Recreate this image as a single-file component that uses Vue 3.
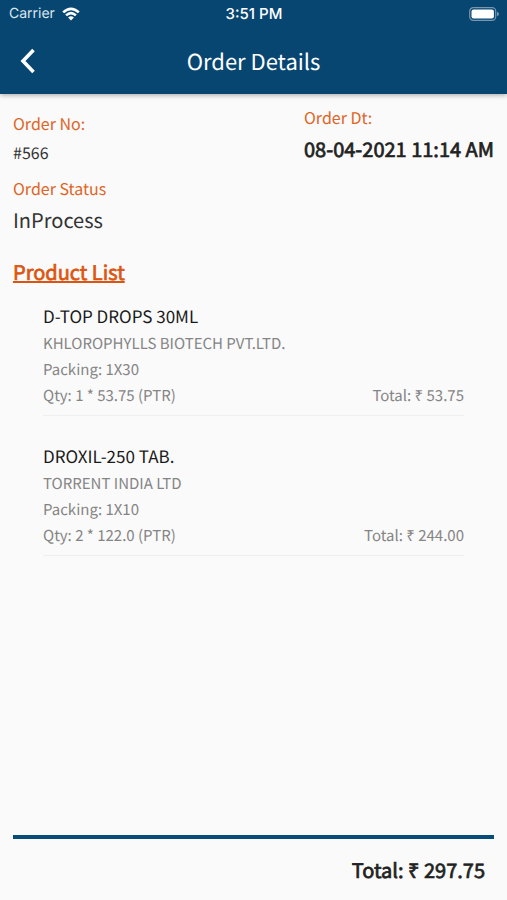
<script setup>
const order = {
  number: '#566',
  date: '08-04-2021 11:14 AM',
  status: 'InProcess',
  total: '297.75',
}

const products = [
  {
    name: 'D-TOP DROPS 30ML',
    company: 'KHLOROPHYLLS BIOTECH PVT.LTD.',
    packing: '1X30',
    quantity: '1 * 53.75 (PTR)',
    total: '53.75',
  },
  {
    name: 'DROXIL-250 TAB.',
    company: 'TORRENT INDIA LTD',
    packing: '1X10',
    quantity: '2 * 122.0 (PTR)',
    total: '244.00',
  },
]
</script>

<template>
  <div class="screen">
    <header class="top">
      <div class="status-bar">
        <div class="carrier">
          <span>Carrier</span>
          <svg class="wifi" viewBox="0 0 18 14" aria-hidden="true">
            <path d="M0.3 4.4 Q9 -3.6 17.7 4.4 L15.9 6.3 Q9 0.1 2.1 6.3Z" />
            <path d="M3.2 7.4 Q9 2.2 14.8 7.4 L13 9.3 Q9 5.7 5 9.3Z" />
            <path d="M6.1 10.4 Q9 8 11.9 10.4 L9 13.5Z" />
          </svg>
        </div>
        <span class="time">3:51 PM</span>
        <svg class="battery" viewBox="0 0 30 14" aria-hidden="true">
          <rect class="shell" x="0.7" y="0.7" width="26" height="12.6" rx="3.6" />
          <rect x="2.5" y="2.5" width="22.4" height="9" rx="2" />
          <path class="tip" d="M28 4.7 Q30 5.4 30 7 T28 9.3Z" />
        </svg>
      </div>
      <div class="nav">
        <button class="back" type="button" aria-label="Back">
          <svg viewBox="0 0 16 26" aria-hidden="true"><path d="M13.5 2 L3 13 L13.5 24" /></svg>
        </button>
        <h1>Order Details</h1>
      </div>
    </header>

    <main>
      <section class="summary">
        <div class="number">
          <p class="label">Order No:</p>
          <p class="order-number">{{ order.number }}</p>
        </div>
        <div class="date">
          <p class="label">Order Dt:</p>
          <p class="strong">{{ order.date }}</p>
        </div>
      </section>
      <section class="state">
        <p class="label">Order Status</p>
        <p class="status">{{ order.status }}</p>
      </section>
      <h2>Product List</h2>
      <ul>
        <li v-for="product in products" :key="product.name">
          <h3>{{ product.name }}</h3>
          <p>{{ product.company }}</p>
          <p>Packing: {{ product.packing }}</p>
          <div class="line">
            <span>Qty: {{ product.quantity }}</span>
            <span>Total: ₹ {{ product.total }}</span>
          </div>
        </li>
      </ul>
    </main>

    <footer>
      <p class="strong">Total: ₹ {{ order.total }}</p>
    </footer>
  </div>
</template>

<style>
body {
  background: #fafafa;
}
</style>

<style scoped>
.screen {
  display: flex;
  flex-direction: column;
  min-height: 100vh;
  font-family: "Noto Sans CJK SC", "Noto Sans", sans-serif;
  text-rendering: geometricPrecision;
  color: #212121;
  background: #fafafa;
}
h1, h2, h3, p, ul {
  margin: 0;
  padding: 0;
  font-weight: 400;
}
.top {
  color: #fff;
  background: #084672;
  box-shadow: 0 1px 5px rgba(0, 0, 0, 0.35);
}
.status-bar {
  display: grid;
  grid-template-columns: 1fr auto 1fr;
  align-items: center;
  height: 27px;
  padding: 0 8px 0 9px;
  font-family: Inter, sans-serif;
  font-size: 14px;
}
.carrier {
  display: flex;
  align-items: center;
  gap: 7px;
  color: #dce6ee;
}
.wifi {
  width: 18px;
  height: 14px;
  fill: #fff;
}
.time {
  font-size: 15px;
  font-weight: 500;
}
.battery {
  justify-self: end;
  width: 30px;
  height: 14px;
  fill: #fff;
}
.battery .shell {
  fill: none;
  stroke: #7896ae;
  stroke-width: 1.2;
}
.battery .tip {
  fill: #7896ae;
}
.nav {
  display: grid;
  grid-template-columns: 56px 1fr 56px;
  align-items: center;
  height: 67px;
}
.back {
  display: flex;
  align-items: center;
  justify-content: center;
  height: 48px;
  padding: 0;
  border: 0;
  color: inherit;
  background: none;
}
.back svg {
  width: 16px;
  height: 26px;
  fill: none;
  stroke: currentColor;
  stroke-width: 3.6;
}
h1 {
  font-size: 22px;
  line-height: 30px;
  text-align: center;
}
main {
  flex: 1;
  padding: 11px 13px;
}
.summary {
  display: flex;
  justify-content: space-between;
}
.label {
  font-size: 16px;
  line-height: 24px;
  color: #df6526;
}
.number {
  padding-top: 6px;
}
.order-number {
  padding-top: 4px;
  font-size: 16px;
  line-height: 26px;
  color: #333;
}
.strong {
  font-size: 20px;
  line-height: 40px;
  -webkit-text-stroke: 0.7px currentColor;
}
.state {
  padding-top: 7px;
}
.status {
  font-size: 20px;
  line-height: 40px;
  color: #333;
}
h2 {
  padding-top: 16px;
  font-size: 20px;
  line-height: 32px;
  color: #dc5510;
  text-decoration: underline;
  -webkit-text-stroke: 0.7px currentColor;
}
ul {
  display: grid;
  gap: 25px;
  padding: 13px 30px 0;
  list-style: none;
}
li {
  border-bottom: 1px solid #efefef;
  padding-bottom: 6px;
  font-size: 15px;
  line-height: 26px;
  color: #858585;
}
h3 {
  font-size: 17px;
  line-height: 30px;
  color: #1a1a1a;
}
.line {
  display: flex;
  justify-content: space-between;
}
footer {
  margin: 0 13px;
  padding: 11px 9px 10px;
  border-top: 4px solid #084d79;
  text-align: right;
}
</style>
